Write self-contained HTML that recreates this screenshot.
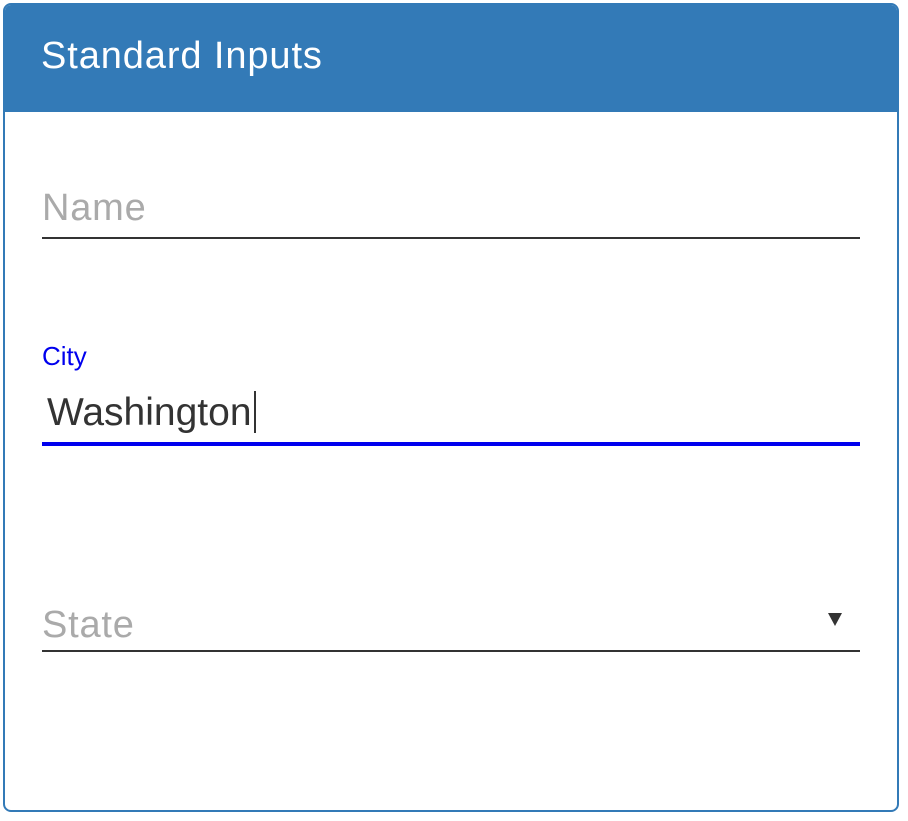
<!DOCTYPE html>
<html><head><style>
body{margin:0;background:#fff;font-family:"Liberation Sans",Arial,sans-serif;}
.p{position:absolute;left:3px;top:3px;width:892px;height:805px;border:2px solid #337ab7;border-radius:8px;overflow:hidden;background:#fff}
.h{position:absolute;left:0;top:0;right:0;height:107px;background:#337ab7;color:#fff;font-size:38px;letter-spacing:0.9px}
.h span{position:absolute;left:36px;top:30px}
.t{position:absolute;white-space:nowrap}
.l{position:absolute;left:37px;width:818px;height:2px;background:#333}
</style></head><body>
<div class="p">
<div class="h"><span>Standard Inputs</span></div>
<div class="t" style="left:37px;top:182px;font-size:38px;letter-spacing:0.8px;color:#aaa">Name</div>
<div class="l" style="top:232px"></div>
<div class="t" style="left:37px;top:336px;font-size:26px;color:#0000ee">City</div>
<div class="t" style="left:42px;top:386px;font-size:39px;color:#333">Washington<span style="display:inline-block;width:2px;height:42px;background:#333;vertical-align:-8px;margin-left:2px"></span></div>
<div class="l" style="top:437px;height:4px;background:#0000ee"></div>
<div class="t" style="left:37px;top:599px;font-size:38px;letter-spacing:0.8px;color:#aaa">State</div>
<svg style="position:absolute;left:822px;top:607px" width="16" height="15"><path d="M1 1H15L8 14Z" fill="#333"/></svg>
<div class="l" style="top:645px"></div>
</div>
</body></html>
